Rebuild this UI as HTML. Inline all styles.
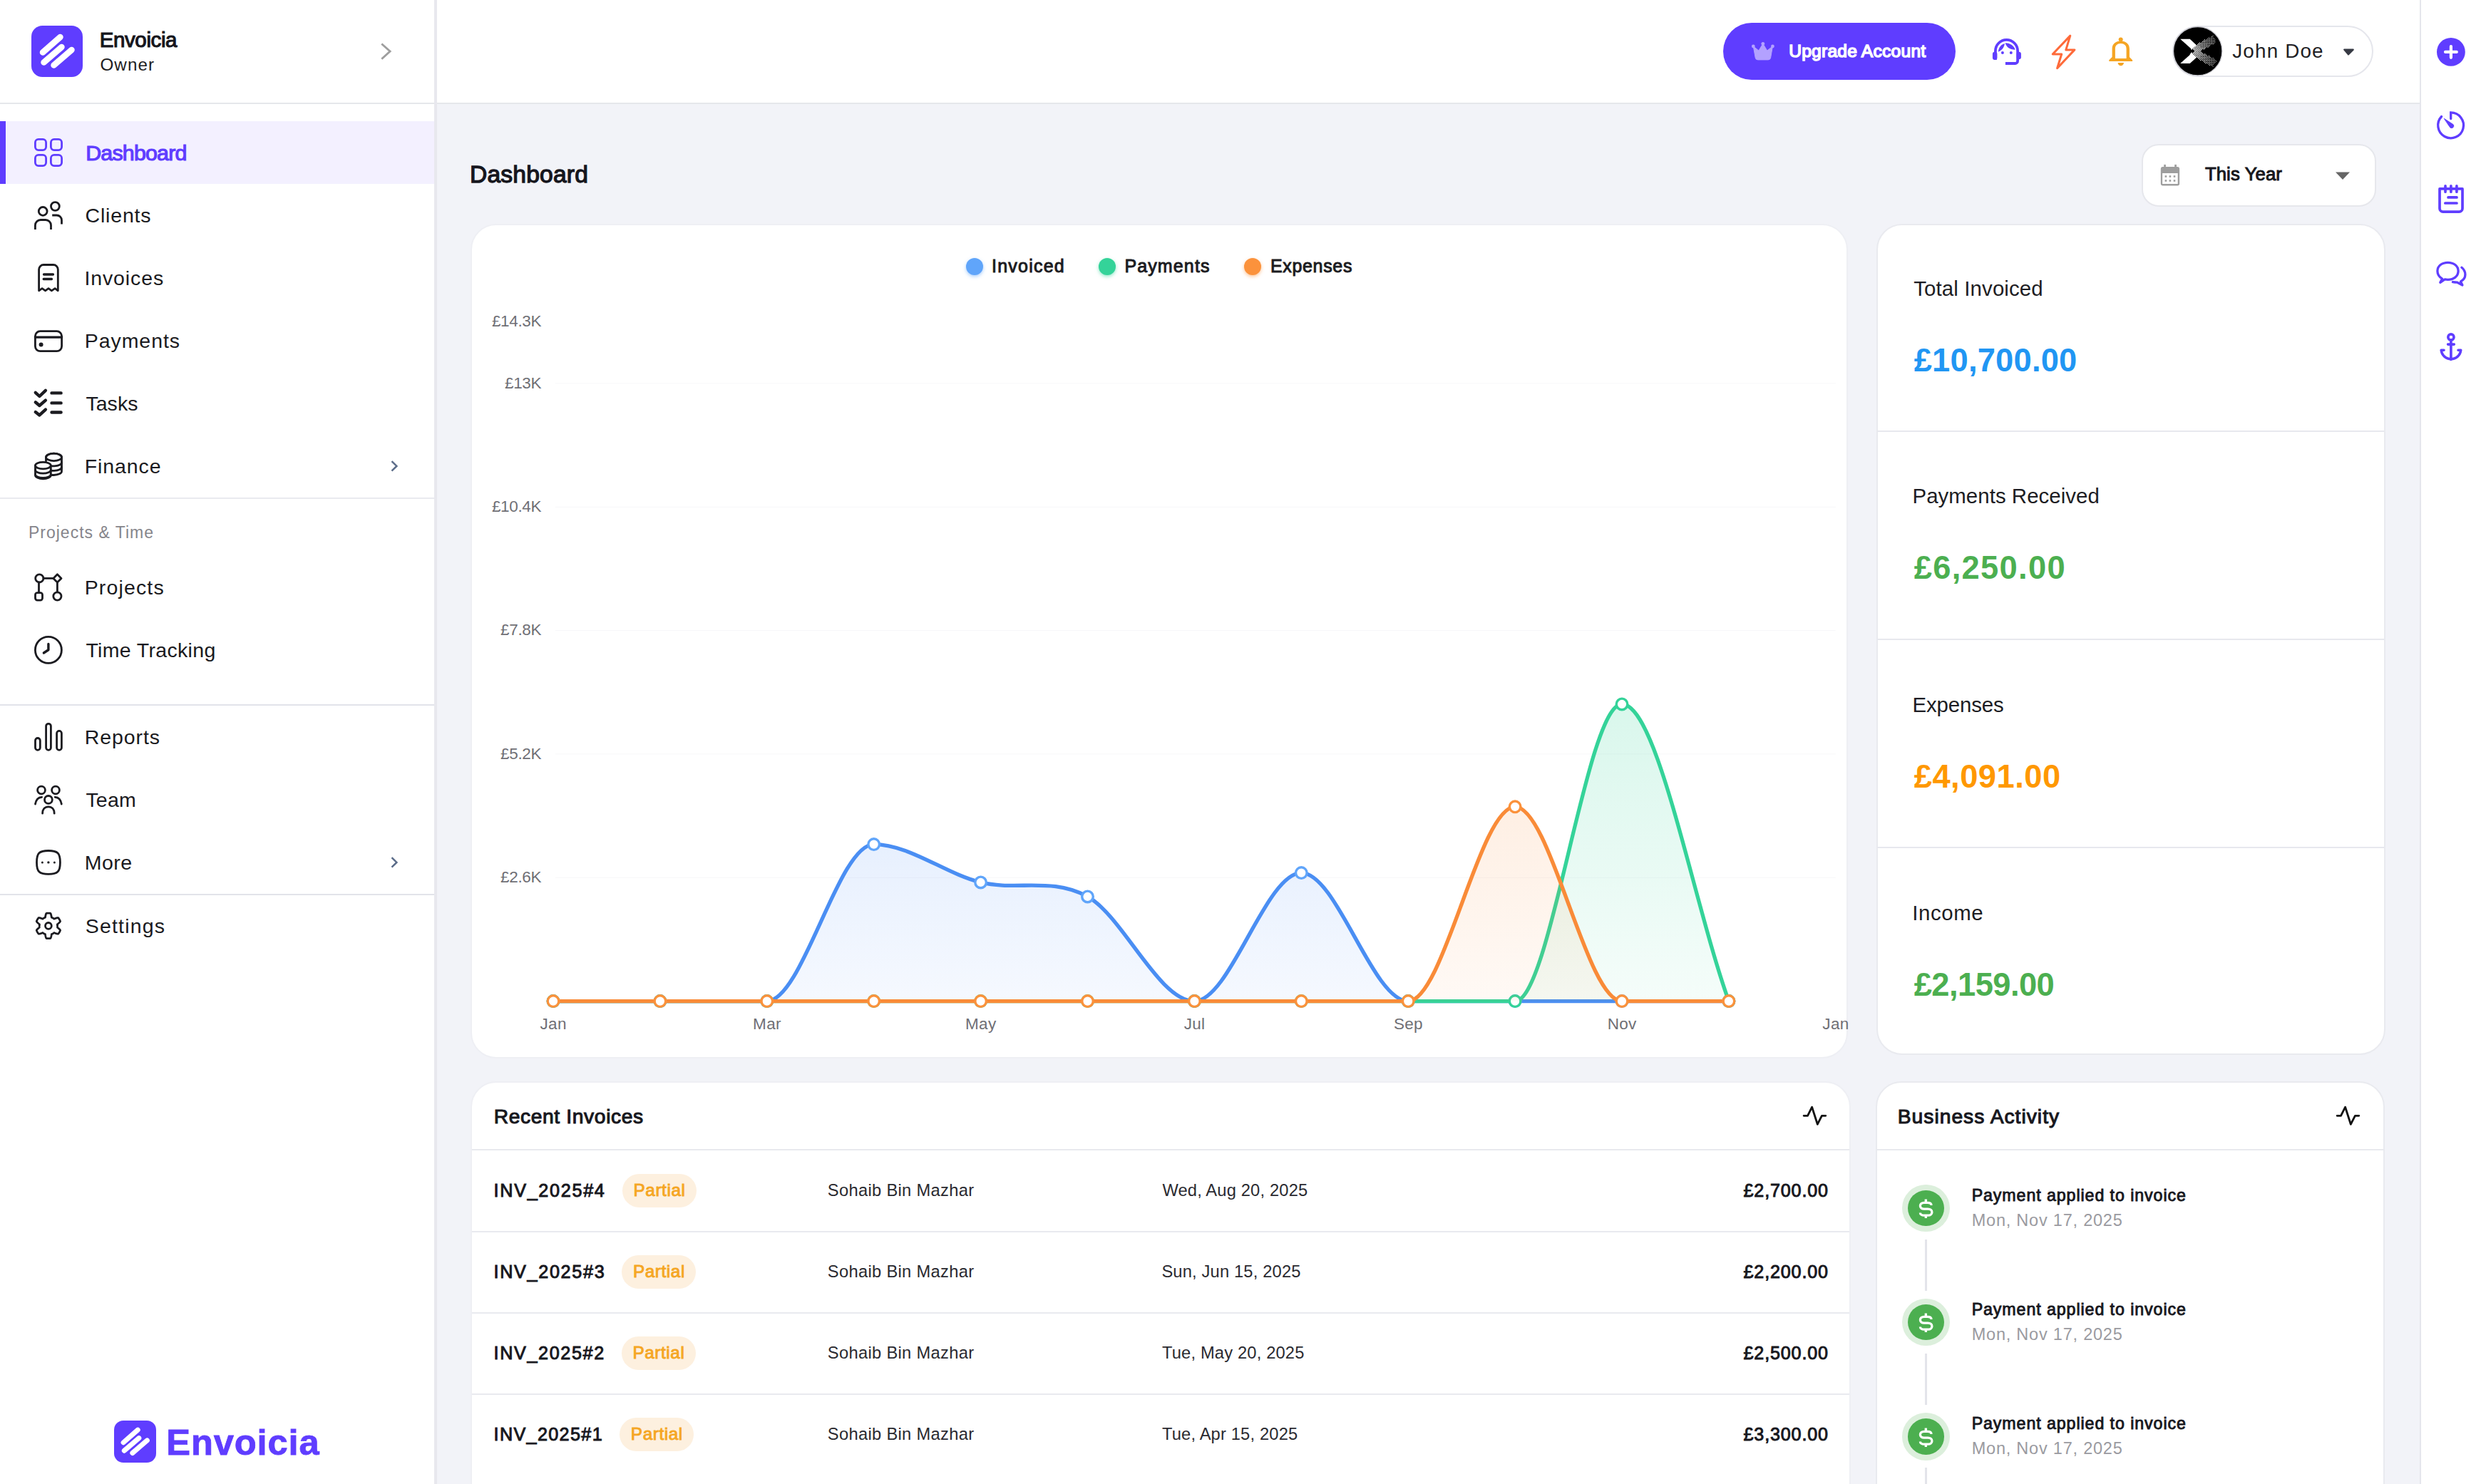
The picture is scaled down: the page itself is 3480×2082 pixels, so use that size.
<!DOCTYPE html>
<html><head><meta charset="utf-8"><style>
html,body{margin:0;padding:0;}
body{width:3480px;height:2082px;position:relative;overflow:hidden;background:#f2f3f8;font-family:"Liberation Sans",sans-serif;}
</style></head><body>
<div style="position:absolute;left:0px;top:0px;width:609px;height:2082px;background:#fff"></div><div style="position:absolute;left:609px;top:0px;width:4px;height:2082px;background:#e8e8ee"></div><div style="position:absolute;left:613px;top:0px;width:2781px;height:144px;background:#fff"></div><div style="position:absolute;left:0px;top:144px;width:609px;height:2px;background:#e5e7eb"></div><div style="position:absolute;left:613px;top:144px;width:2781px;height:2px;background:#e5e7eb"></div><div style="position:absolute;left:3394px;top:0px;width:2px;height:2082px;background:#e5e6ec"></div><div style="position:absolute;left:3396px;top:0px;width:84px;height:2082px;background:#fff"></div><svg style="position:absolute;left:44px;top:36px;" width="72" height="72" viewBox="0 0 72 72"><rect width="72" height="72" rx="15.5" fill="#5f3dff"/><g stroke="#fff" stroke-width="8.5" stroke-linecap="round"><line x1="16" y1="37.5" x2="40.5" y2="16"/><line x1="17.5" y1="51.5" x2="42.5" y2="30"/><line x1="31.5" y1="55.5" x2="56.5" y2="34"/></g></svg><div style="position:absolute;top:41.02px;font-size:29.5px;line-height:29.5px;font-weight:400;color:#16161c;white-space:nowrap;-webkit-text-stroke:1.12px #16161c;letter-spacing:-0.403px;left:139.76px;">Envoicia</div><div style="position:absolute;top:79.33px;font-size:24.2px;line-height:24.2px;font-weight:400;color:#1d1d22;white-space:nowrap;letter-spacing:1.050px;left:140.50px;">Owner</div><svg style="position:absolute;left:530px;top:55px;" width="24" height="34" viewBox="0 0 24 34"><path d="M5.3 6.5 L17.1 17 L5.3 27.7" fill="none" stroke="#9e9e9e" stroke-width="2.9" stroke-linecap="butt" stroke-linejoin="miter"/></svg><div style="position:absolute;left:0px;top:170px;width:609px;height:88px;background:#f3f0ff"></div><div style="position:absolute;left:0px;top:170px;width:8px;height:88px;background:#5f3dff"></div><svg style="position:absolute;left:0;top:0" width="608" height="1400"><g transform="translate(48,194)" fill="none" stroke="#5f3dff" stroke-width="2.8" stroke-linecap="round" stroke-linejoin="round" ><rect x="1.4" y="1.4" width="15.2" height="15.2" rx="4.5"/><rect x="23.4" y="1.4" width="15.2" height="15.2" rx="4.5"/><rect x="1.4" y="23.4" width="15.2" height="15.2" rx="4.5"/><rect x="23.4" y="23.4" width="15.2" height="15.2" rx="4.5"/></g><g transform="translate(48,282)" fill="none" stroke="#1b1b20" stroke-width="2.8" stroke-linejoin="round" stroke-linecap="butt"><circle cx="12.2" cy="14.4" r="5.9"/><path d="M1.4 39.9 V34 a7.5 7.5 0 0 1 7.5 -7.5 h7.1 a7.5 7.5 0 0 1 7.5 7.5 V39.9"/><circle cx="29.4" cy="7.5" r="5.9"/><path d="M25.2 20 H31.5 a7 7 0 0 1 7 7 V32.6"/></g><g transform="translate(48,370)" fill="none" stroke="#1b1b20" stroke-width="2.8" stroke-linecap="round" stroke-linejoin="round" ><path d="M6.6 37.8 V8 a6.5 6.5 0 0 1 6.5 -6.5 h13.7 a6.5 6.5 0 0 1 6.5 6.5 V37.8 L29.1 34.7 L24.4 37.8 L20 34.7 L15.6 37.8 L11.1 34.7 Z"/><path d="M13.5 15 H26.5 M13.2 21.5 H24.5" stroke-width="3.3"/></g><g transform="translate(48,458)" fill="none" stroke="#1b1b20" stroke-width="2.8" stroke-linecap="round" stroke-linejoin="round" ><rect x="1.4" y="6.6" width="37.2" height="28.1" rx="7"/><path d="M1.4 15.1 H38.6" stroke-width="3.4"/><circle cx="9.6" cy="25.6" r="1.6" fill="#1b1b20"/></g><g transform="translate(48,546)" fill="none" stroke="#1b1b20" stroke-width="4.4" stroke-linecap="round" stroke-linejoin="round" ><path d="M1.8 4.8 L7.4 10 L15.9 1.8 M1.8 18.3 L7.4 23 L15.9 15.6 M1.8 32 L7.4 36.4 L15.9 28.6 M24.5 5.4 H37.6 M24.5 19.4 H37.6 M24.5 32.5 H37.6"/></g><g transform="translate(48,634)" fill="none" stroke="#1b1b20" stroke-width="2.8" stroke-linecap="round" stroke-linejoin="round" ><path d="M16.5 13 V7.4 a11 5.2 0 0 1 22 0 V27 a11 5.2 0 0 1 -11 5.5 H23.5"/><ellipse cx="27.5" cy="7.4" rx="11" ry="5.2"/><path d="M23.5 19.9 H28 a10.5 5.2 0 0 0 10.5 -5.5 M23.5 26.4 H28 a10.5 5.2 0 0 0 10.5 -5.5" /><path d="M1.5 19.1 V32.8 a10.9 5 0 0 0 21.8 0 V19.1"/><ellipse cx="12.4" cy="19.1" rx="10.9" ry="4.7" fill="#fff"/><path d="M1.5 25.2 a10.9 5 0 0 0 21.8 0 M1.5 31.4 a10.9 5 0 0 0 21.8 0"/></g><g transform="translate(48,804)" fill="none" stroke="#1b1b20" stroke-width="2.8" stroke-linecap="round" stroke-linejoin="round" ><circle cx="7.3" cy="7.4" r="5.6"/><path d="M32.4 1.8 L38 7.4 L32.4 13 L26.8 7.4 Z"/><path d="M13 7.4 H26.8 M6.5 13 V27.6 M32.4 13 V26.9"/><rect x="1.5" y="27.6" width="10" height="10.5" rx="2.8"/><circle cx="32.4" cy="32.5" r="5.6"/></g><g transform="translate(48,892)" fill="none" stroke="#1b1b20" stroke-width="2.8" stroke-linecap="round" stroke-linejoin="round" ><circle cx="19.9" cy="19.9" r="18.5"/><path d="M19.9 11.5 V19.8 L13.4 24" stroke-width="3.4"/></g><g transform="translate(48,1014)" fill="none" stroke="#1b1b20" stroke-width="2.8" stroke-linecap="round" stroke-linejoin="round" ><rect x="1.5" y="21.5" width="6.8" height="16.8" rx="3.4"/><rect x="16.6" y="1.3" width="6.8" height="37" rx="3.4"/><rect x="31.6" y="11.4" width="6.8" height="26.9" rx="3.4"/></g><g transform="translate(48,1102)" fill="none" stroke="#1b1b20" stroke-width="2.8" stroke-linecap="round" stroke-linejoin="round" ><circle cx="10" cy="6.5" r="5.4"/><circle cx="30" cy="6.5" r="5.4"/><circle cx="19.9" cy="19.9" r="5.4"/><path d="M1.5 26 C2.5 20 5.5 16.6 10.6 16.3 M38.3 26 C37.3 20 34.3 16.6 29.2 16.3 M11.6 39.2 C11.6 33.3 15 29.8 19.9 29.8 C24.8 29.8 28.2 33.3 28.2 39.2"/></g><g transform="translate(48,1190)" fill="none" stroke="#1b1b20" stroke-width="2.8" stroke-linecap="round" stroke-linejoin="round" ><path d="M3.5 19.9 C3.5 7 7 3.5 19.9 3.5 C32.8 3.5 36.4 7 36.4 19.9 C36.4 32.8 32.8 36.4 19.9 36.4 C7 36.4 3.5 32.8 3.5 19.9 Z"/><circle cx="11.4" cy="19.9" r="1.5" fill="#1b1b20" stroke="none"/><circle cx="19.9" cy="19.9" r="1.7" fill="#1b1b20" stroke="none"/><circle cx="28.4" cy="19.9" r="1.5" fill="#1b1b20" stroke="none"/></g><g transform="translate(48,1279)" fill="none" stroke="#1b1b20" stroke-width="2.8" stroke-linecap="round" stroke-linejoin="round" ><polygon points="32.50,19.90 32.50,20.23 32.48,20.56 32.46,20.89 32.43,21.22 32.39,21.54 32.34,21.87 32.64,22.26 33.27,22.74 33.93,23.27 34.58,23.83 35.22,24.44 35.81,25.07 36.34,25.72 36.52,26.28 36.35,26.71 36.16,27.14 35.97,27.56 35.76,27.98 35.54,28.39 35.32,28.80 35.08,29.20 34.83,29.59 34.57,29.98 34.30,30.36 34.02,30.74 33.73,31.10 33.16,31.23 32.33,31.09 31.49,30.89 30.65,30.65 29.83,30.37 29.05,30.06 28.32,29.75 27.83,29.69 27.57,29.90 27.31,30.09 27.04,30.28 26.76,30.47 26.48,30.64 26.20,30.81 25.91,30.97 25.62,31.13 25.32,31.27 25.02,31.41 24.72,31.54 24.42,31.66 24.23,32.11 24.13,32.90 24.00,33.73 23.83,34.58 23.63,35.43 23.38,36.26 23.08,37.05 22.68,37.48 22.22,37.55 21.76,37.60 21.30,37.65 20.83,37.68 20.37,37.69 19.90,37.70 19.43,37.69 18.97,37.68 18.50,37.65 18.04,37.60 17.58,37.55 17.12,37.48 16.72,37.05 16.42,36.26 16.17,35.43 15.97,34.58 15.80,33.73 15.67,32.90 15.57,32.11 15.38,31.66 15.08,31.54 14.78,31.41 14.48,31.27 14.18,31.13 13.89,30.97 13.60,30.81 13.32,30.64 13.04,30.47 12.76,30.28 12.49,30.09 12.23,29.90 11.97,29.69 11.48,29.75 10.75,30.06 9.97,30.37 9.15,30.65 8.31,30.89 7.47,31.09 6.64,31.23 6.07,31.10 5.78,30.74 5.50,30.36 5.23,29.98 4.97,29.59 4.72,29.20 4.48,28.80 4.26,28.39 4.04,27.98 3.83,27.56 3.64,27.14 3.45,26.71 3.28,26.28 3.46,25.72 3.99,25.07 4.58,24.44 5.22,23.83 5.87,23.27 6.53,22.74 7.16,22.26 7.46,21.87 7.41,21.54 7.37,21.22 7.34,20.89 7.32,20.56 7.30,20.23 7.30,19.90 7.30,19.57 7.32,19.24 7.34,18.91 7.37,18.58 7.41,18.26 7.46,17.93 7.16,17.54 6.53,17.06 5.87,16.53 5.22,15.97 4.58,15.36 3.99,14.73 3.46,14.08 3.28,13.52 3.45,13.09 3.64,12.66 3.83,12.24 4.04,11.82 4.26,11.41 4.48,11.00 4.72,10.60 4.97,10.21 5.23,9.82 5.50,9.44 5.78,9.06 6.07,8.70 6.64,8.57 7.47,8.71 8.31,8.91 9.15,9.15 9.97,9.43 10.75,9.74 11.48,10.05 11.97,10.11 12.23,9.90 12.49,9.71 12.76,9.52 13.04,9.33 13.32,9.16 13.60,8.99 13.89,8.83 14.18,8.67 14.48,8.53 14.78,8.39 15.08,8.26 15.38,8.14 15.57,7.69 15.67,6.90 15.80,6.07 15.97,5.22 16.17,4.37 16.42,3.54 16.72,2.75 17.12,2.32 17.58,2.25 18.04,2.20 18.50,2.15 18.97,2.12 19.43,2.11 19.90,2.10 20.37,2.11 20.83,2.12 21.30,2.15 21.76,2.20 22.22,2.25 22.68,2.32 23.08,2.75 23.38,3.54 23.63,4.37 23.83,5.22 24.00,6.07 24.13,6.90 24.23,7.69 24.42,8.14 24.72,8.26 25.02,8.39 25.32,8.53 25.62,8.67 25.91,8.83 26.20,8.99 26.48,9.16 26.76,9.33 27.04,9.52 27.31,9.71 27.57,9.90 27.83,10.11 28.32,10.05 29.05,9.74 29.83,9.43 30.65,9.15 31.49,8.91 32.33,8.71 33.16,8.57 33.73,8.70 34.02,9.06 34.30,9.44 34.57,9.82 34.83,10.21 35.08,10.60 35.32,11.00 35.54,11.41 35.76,11.82 35.97,12.24 36.16,12.66 36.35,13.09 36.52,13.52 36.34,14.08 35.81,14.73 35.22,15.36 34.58,15.97 33.93,16.53 33.27,17.06 32.64,17.54 32.34,17.93 32.39,18.26 32.43,18.58 32.46,18.91 32.48,19.24 32.50,19.57"/><circle cx="19.9" cy="19.9" r="4.4"/></g></svg><div style="position:absolute;top:198.56px;font-size:30.4px;line-height:30.4px;font-weight:400;color:#5f3dff;white-space:nowrap;-webkit-text-stroke:1.16px #5f3dff;letter-spacing:-0.807px;left:120.18px;">Dashboard</div><div style="position:absolute;top:287.57px;font-size:28.5px;line-height:28.5px;font-weight:400;color:#1a1a20;white-space:nowrap;letter-spacing:0.800px;left:119.60px;">Clients</div><div style="position:absolute;top:375.57px;font-size:28.5px;line-height:28.5px;font-weight:400;color:#1a1a20;white-space:nowrap;letter-spacing:0.900px;left:118.40px;">Invoices</div><div style="position:absolute;top:463.57px;font-size:28.5px;line-height:28.5px;font-weight:400;color:#1a1a20;white-space:nowrap;letter-spacing:0.957px;left:118.70px;">Payments</div><div style="position:absolute;top:551.57px;font-size:28.5px;line-height:28.5px;font-weight:400;color:#1a1a20;white-space:nowrap;letter-spacing:0.050px;left:120.40px;">Tasks</div><div style="position:absolute;top:639.57px;font-size:28.5px;line-height:28.5px;font-weight:400;color:#1a1a20;white-space:nowrap;letter-spacing:0.900px;left:118.70px;">Finance</div><div style="position:absolute;top:809.57px;font-size:28.5px;line-height:28.5px;font-weight:400;color:#1a1a20;white-space:nowrap;letter-spacing:1.143px;left:118.70px;">Projects</div><div style="position:absolute;top:897.57px;font-size:28.5px;line-height:28.5px;font-weight:400;color:#1a1a20;white-space:nowrap;letter-spacing:0.333px;left:120.40px;">Time Tracking</div><div style="position:absolute;top:1019.57px;font-size:28.5px;line-height:28.5px;font-weight:400;color:#1a1a20;white-space:nowrap;letter-spacing:0.917px;left:118.70px;">Reports</div><div style="position:absolute;top:1107.58px;font-size:28.5px;line-height:28.5px;font-weight:400;color:#1a1a20;white-space:nowrap;letter-spacing:0.200px;left:120.40px;">Team</div><div style="position:absolute;top:1195.58px;font-size:28.5px;line-height:28.5px;font-weight:400;color:#1a1a20;white-space:nowrap;letter-spacing:0.500px;left:118.70px;">More</div><div style="position:absolute;top:1284.58px;font-size:28.5px;line-height:28.5px;font-weight:400;color:#1a1a20;white-space:nowrap;letter-spacing:1.200px;left:119.70px;">Settings</div><div style="position:absolute;left:0px;top:697.5px;width:609px;height:2px;background:#e9eaef"></div><div style="position:absolute;top:736.45px;font-size:23px;line-height:23px;font-weight:400;color:#85858b;white-space:nowrap;letter-spacing:0.993px;left:40.00px;">Projects &amp; Time</div><div style="position:absolute;left:0px;top:987.6px;width:609px;height:2px;background:#e2e3ea"></div><div style="position:absolute;left:0px;top:1253.6px;width:609px;height:2px;background:#e2e3ea"></div><svg style="position:absolute;left:544px;top:644px;" width="20" height="20" viewBox="0 0 20 20"><path d="M5.5 3.2 L12.4 9.9 L5.5 16.7" fill="none" stroke="#5b6c89" stroke-width="2.5" stroke-linecap="butt" stroke-linejoin="miter"/></svg><svg style="position:absolute;left:544px;top:1200px;" width="20" height="20" viewBox="0 0 20 20"><path d="M5.5 3.2 L12.4 9.9 L5.5 16.7" fill="none" stroke="#5b6c89" stroke-width="2.5" stroke-linecap="butt" stroke-linejoin="miter"/></svg><svg style="position:absolute;left:160px;top:1993px;" width="59" height="59" viewBox="0 0 59 59"><rect width="59" height="59" rx="13" fill="#5f3dff"/><g transform="scale(0.82)"><g stroke="#fff" stroke-width="8.5" stroke-linecap="round"><line x1="16" y1="37.5" x2="40.5" y2="16"/><line x1="17.5" y1="51.5" x2="42.5" y2="30"/><line x1="31.5" y1="55.5" x2="56.5" y2="34"/></g></g></svg><div style="position:absolute;top:1998.90px;font-size:50.7px;line-height:50.7px;font-weight:700;color:#5f3dff;white-space:nowrap;letter-spacing:0.843px;left:233.30px;-webkit-text-stroke:0.8px #5f3dff;">Envoicia</div><div style="position:absolute;left:2417px;top:32px;width:326px;height:80px;background:#5f3dff;border-radius:40px"></div><div style="position:absolute;top:59.99px;font-size:24.6px;line-height:24.6px;font-weight:400;color:#fff;white-space:nowrap;-webkit-text-stroke:1.50px #fff;letter-spacing:0.236px;left:2509.15px;">Upgrade Account</div><div style="position:absolute;left:3047px;top:36px;width:282px;height:72px;box-sizing:border-box;border:2px solid #e5e6ec;border-radius:36px;background:#fff"></div><div style="position:absolute;top:57.87px;font-size:27.8px;line-height:27.8px;font-weight:400;color:#1f1f25;white-space:nowrap;letter-spacing:1.171px;left:3131.30px;">John Doe</div><svg style="position:absolute;left:3280px;top:62px;" width="28" height="22" viewBox="0 0 28 22"><path d="M8.2 7.6 L20.7 7.6 L13.9 14.4 Z" fill="#373a44" stroke="#373a44" stroke-width="2.2" stroke-linejoin="round"/></svg><div style="position:absolute;top:228.14px;font-size:33.6px;line-height:33.6px;font-weight:400;color:#16161d;white-space:nowrap;-webkit-text-stroke:1.28px #16161d;letter-spacing:0.215px;left:658.94px;">Dashboard</div><div style="position:absolute;left:3004px;top:202px;width:329px;height:87.5px;box-sizing:border-box;border:2.5px solid #e6e7ec;border-radius:24px;background:#fff"></div><div style="position:absolute;top:232.25px;font-size:25.7px;line-height:25.7px;font-weight:400;color:#17171c;white-space:nowrap;-webkit-text-stroke:0.98px #17171c;letter-spacing:0.115px;left:3092.89px;">This Year</div><svg style="position:absolute;left:3270px;top:236px;" width="30" height="20" viewBox="0 0 30 20"><path d="M6 5.5 L26 5.5 L16 16 Z" fill="#666"/></svg><div style="position:absolute;left:659.5px;top:313.5px;width:1932px;height:1171px;box-sizing:border-box;border:2px solid #eeeff4;border-radius:36px;background:#fff"></div><div style="position:absolute;left:2632px;top:313.5px;width:713.5px;height:1166.5px;box-sizing:border-box;border:2px solid #e9eaef;border-radius:36px;background:#fff"></div><div style="position:absolute;left:2633px;top:603.5px;width:711px;height:2px;background:#e7e8ee"></div><div style="position:absolute;left:2633px;top:896px;width:711px;height:2px;background:#e7e8ee"></div><div style="position:absolute;left:2633px;top:1188px;width:711px;height:2px;background:#e7e8ee"></div><div style="position:absolute;top:390.21px;font-size:29.4px;line-height:29.4px;font-weight:400;color:#1d1d23;white-space:nowrap;letter-spacing:0.138px;left:2684.20px;">Total Invoiced</div><div style="position:absolute;top:483.10px;font-size:45.3px;line-height:45.3px;font-weight:700;color:#2196f3;white-space:nowrap;letter-spacing:0.211px;left:2684.70px;">&#163;10,700.00</div><div style="position:absolute;top:681.41px;font-size:29.4px;line-height:29.4px;font-weight:400;color:#1d1d23;white-space:nowrap;letter-spacing:0.056px;left:2682.50px;">Payments Received</div><div style="position:absolute;top:774.20px;font-size:45.3px;line-height:45.3px;font-weight:700;color:#4caf50;white-space:nowrap;letter-spacing:1.312px;left:2684.70px;">&#163;6,250.00</div><div style="position:absolute;top:974.01px;font-size:29.4px;line-height:29.4px;font-weight:400;color:#1d1d23;white-space:nowrap;letter-spacing:-0.114px;left:2682.50px;">Expenses</div><div style="position:absolute;top:1067.09px;font-size:45.3px;line-height:45.3px;font-weight:700;color:#ff9800;white-space:nowrap;letter-spacing:0.500px;left:2684.70px;">&#163;4,091.00</div><div style="position:absolute;top:1266.41px;font-size:29.4px;line-height:29.4px;font-weight:400;color:#1d1d23;white-space:nowrap;letter-spacing:0.620px;left:2682.20px;">Income</div><div style="position:absolute;top:1359.49px;font-size:45.3px;line-height:45.3px;font-weight:700;color:#4caf50;white-space:nowrap;letter-spacing:-0.550px;left:2684.70px;">&#163;2,159.00</div><div style="position:absolute;left:660px;top:1517px;width:1936px;height:700px;box-sizing:border-box;border:2px solid #eeeff4;border-radius:36px;background:#fff"></div><div style="position:absolute;left:2631px;top:1517px;width:714px;height:700px;box-sizing:border-box;border:2px solid #e9eaef;border-radius:36px;background:#fff"></div><div style="position:absolute;top:1551.53px;font-size:28.2px;line-height:28.2px;font-weight:400;color:#17171d;white-space:nowrap;-webkit-text-stroke:1.07px #17171d;letter-spacing:0.645px;left:692.64px;">Recent Invoices</div><div style="position:absolute;top:1551.73px;font-size:28.2px;line-height:28.2px;font-weight:400;color:#17171d;white-space:nowrap;-webkit-text-stroke:1.07px #17171d;letter-spacing:1.027px;left:2661.74px;">Business Activity</div><div style="position:absolute;left:662px;top:1612px;width:1932px;height:2px;background:#e8e9ee"></div><div style="position:absolute;left:2633px;top:1612px;width:710px;height:2px;background:#e8e9ee"></div><div style="position:absolute;top:1657.68px;font-size:25.2px;line-height:25.2px;font-weight:400;color:#17171d;white-space:nowrap;-webkit-text-stroke:0.96px #17171d;letter-spacing:1.694px;left:692.58px;">INV_2025#4</div><div style="position:absolute;left:872.7px;top:1646.8px;width:104.3px;height:47.7px;background:#fdf0df;border-radius:24px"></div><div style="position:absolute;top:1658.44px;font-size:24.3px;line-height:24.3px;font-weight:400;color:#f5a623;white-space:nowrap;-webkit-text-stroke:0.92px #f5a623;letter-spacing:0.579px;left:888.56px;">Partial</div><div style="position:absolute;top:1658.95px;font-size:23.7px;line-height:23.7px;font-weight:400;color:#2a2a30;white-space:nowrap;letter-spacing:0.325px;left:1160.80px;">Sohaib Bin Mazhar</div><div style="position:absolute;top:1658.95px;font-size:23.7px;line-height:23.7px;font-weight:400;color:#2a2a30;white-space:nowrap;letter-spacing:0.170px;left:1630.40px;">Wed, Aug 20, 2025</div><div style="position:absolute;top:1657.76px;font-size:25.1px;line-height:25.1px;font-weight:400;color:#17171d;white-space:nowrap;-webkit-text-stroke:0.95px #17171d;letter-spacing:0.850px;right:915.16px;text-align:right;">&#163;2,700.00</div><div style="position:absolute;left:662px;top:1726.5px;width:1932px;height:2px;background:#e9eaef"></div><div style="position:absolute;top:1771.68px;font-size:25.2px;line-height:25.2px;font-weight:400;color:#17171d;white-space:nowrap;-webkit-text-stroke:0.96px #17171d;letter-spacing:1.671px;left:692.58px;">INV_2025#3</div><div style="position:absolute;left:872.0999999999999px;top:1760.8px;width:104.3px;height:47.7px;background:#fdf0df;border-radius:24px"></div><div style="position:absolute;top:1772.44px;font-size:24.3px;line-height:24.3px;font-weight:400;color:#f5a623;white-space:nowrap;-webkit-text-stroke:0.92px #f5a623;letter-spacing:0.579px;left:887.96px;">Partial</div><div style="position:absolute;top:1772.95px;font-size:23.7px;line-height:23.7px;font-weight:400;color:#2a2a30;white-space:nowrap;letter-spacing:0.325px;left:1160.80px;">Sohaib Bin Mazhar</div><div style="position:absolute;top:1772.95px;font-size:23.7px;line-height:23.7px;font-weight:400;color:#2a2a30;white-space:nowrap;letter-spacing:0.170px;left:1629.40px;">Sun, Jun 15, 2025</div><div style="position:absolute;top:1771.76px;font-size:25.1px;line-height:25.1px;font-weight:400;color:#17171d;white-space:nowrap;-webkit-text-stroke:0.95px #17171d;letter-spacing:0.850px;right:915.16px;text-align:right;">&#163;2,200.00</div><div style="position:absolute;left:662px;top:1840.5px;width:1932px;height:2px;background:#e9eaef"></div><div style="position:absolute;top:1885.68px;font-size:25.2px;line-height:25.2px;font-weight:400;color:#17171d;white-space:nowrap;-webkit-text-stroke:0.96px #17171d;letter-spacing:1.627px;left:692.58px;">INV_2025#2</div><div style="position:absolute;left:871.5999999999999px;top:1874.8px;width:104.3px;height:47.7px;background:#fdf0df;border-radius:24px"></div><div style="position:absolute;top:1886.44px;font-size:24.3px;line-height:24.3px;font-weight:400;color:#f5a623;white-space:nowrap;-webkit-text-stroke:0.92px #f5a623;letter-spacing:0.579px;left:887.46px;">Partial</div><div style="position:absolute;top:1886.95px;font-size:23.7px;line-height:23.7px;font-weight:400;color:#2a2a30;white-space:nowrap;letter-spacing:0.325px;left:1160.80px;">Sohaib Bin Mazhar</div><div style="position:absolute;top:1886.95px;font-size:23.7px;line-height:23.7px;font-weight:400;color:#2a2a30;white-space:nowrap;letter-spacing:0.170px;left:1630.00px;">Tue, May 20, 2025</div><div style="position:absolute;top:1885.76px;font-size:25.1px;line-height:25.1px;font-weight:400;color:#17171d;white-space:nowrap;-webkit-text-stroke:0.95px #17171d;letter-spacing:0.850px;right:915.16px;text-align:right;">&#163;2,500.00</div><div style="position:absolute;left:662px;top:1954.5px;width:1932px;height:2px;background:#e9eaef"></div><div style="position:absolute;top:1999.68px;font-size:25.2px;line-height:25.2px;font-weight:400;color:#17171d;white-space:nowrap;-webkit-text-stroke:0.96px #17171d;letter-spacing:1.338px;left:692.58px;">INV_2025#1</div><div style="position:absolute;left:869.0px;top:1988.8px;width:104.3px;height:47.7px;background:#fdf0df;border-radius:24px"></div><div style="position:absolute;top:2000.44px;font-size:24.3px;line-height:24.3px;font-weight:400;color:#f5a623;white-space:nowrap;-webkit-text-stroke:0.92px #f5a623;letter-spacing:0.579px;left:884.86px;">Partial</div><div style="position:absolute;top:2000.95px;font-size:23.7px;line-height:23.7px;font-weight:400;color:#2a2a30;white-space:nowrap;letter-spacing:0.325px;left:1160.80px;">Sohaib Bin Mazhar</div><div style="position:absolute;top:2000.95px;font-size:23.7px;line-height:23.7px;font-weight:400;color:#2a2a30;white-space:nowrap;letter-spacing:0.170px;left:1630.00px;">Tue, Apr 15, 2025</div><div style="position:absolute;top:1999.76px;font-size:25.1px;line-height:25.1px;font-weight:400;color:#17171d;white-space:nowrap;-webkit-text-stroke:0.95px #17171d;letter-spacing:0.850px;right:915.16px;text-align:right;">&#163;3,300.00</div><div style="position:absolute;left:2668.1px;top:1661.7px;width:66.6px;height:66.6px;border-radius:50%;background:#dcefdc"></div><div style="position:absolute;left:2676.2000000000003px;top:1669.8px;width:50.4px;height:50.4px;border-radius:50%;background:#4caf50"></div><svg style="position:absolute;left:2670.1px;top:1665.1px" width="62" height="60"><path d="M39 26 C39 23.6 36.6 22.4 33.8 22.4 H28.8 C25.6 22.4 23.4 24.2 23.4 26.8 C23.4 29.5 25.6 31.2 28.8 31.2 H34.2 C37.6 31.2 39.9 32.9 39.9 35.7 C39.9 38.4 37.6 40.2 34.2 40.2 H28.8 C25.8 40.2 23.4 38.8 23.4 36.4 M31.3 17.5 V22.4 M31.3 40.2 V44" fill="none" stroke="#fff" stroke-width="3.3" stroke-linecap="butt" stroke-linejoin="round"/></svg><div style="position:absolute;top:1665.78px;font-size:23.2px;line-height:23.2px;font-weight:400;color:#17171d;white-space:nowrap;-webkit-text-stroke:0.88px #17171d;letter-spacing:0.925px;left:2765.64px;">Payment applied to invoice</div><div style="position:absolute;top:1700.73px;font-size:23.5px;line-height:23.5px;font-weight:400;color:#9a9aa0;white-space:nowrap;letter-spacing:0.781px;left:2765.70px;">Mon, Nov 17, 2025</div><div style="position:absolute;left:2700px;top:1739.0px;width:3px;height:72px;background:#e3e4ea"></div><div style="position:absolute;left:2668.1px;top:1821.9px;width:66.6px;height:66.6px;border-radius:50%;background:#dcefdc"></div><div style="position:absolute;left:2676.2000000000003px;top:1830.0px;width:50.4px;height:50.4px;border-radius:50%;background:#4caf50"></div><svg style="position:absolute;left:2670.1px;top:1825.3px" width="62" height="60"><path d="M39 26 C39 23.6 36.6 22.4 33.8 22.4 H28.8 C25.6 22.4 23.4 24.2 23.4 26.8 C23.4 29.5 25.6 31.2 28.8 31.2 H34.2 C37.6 31.2 39.9 32.9 39.9 35.7 C39.9 38.4 37.6 40.2 34.2 40.2 H28.8 C25.8 40.2 23.4 38.8 23.4 36.4 M31.3 17.5 V22.4 M31.3 40.2 V44" fill="none" stroke="#fff" stroke-width="3.3" stroke-linecap="butt" stroke-linejoin="round"/></svg><div style="position:absolute;top:1825.98px;font-size:23.2px;line-height:23.2px;font-weight:400;color:#17171d;white-space:nowrap;-webkit-text-stroke:0.88px #17171d;letter-spacing:0.925px;left:2765.64px;">Payment applied to invoice</div><div style="position:absolute;top:1860.93px;font-size:23.5px;line-height:23.5px;font-weight:400;color:#9a9aa0;white-space:nowrap;letter-spacing:0.781px;left:2765.70px;">Mon, Nov 17, 2025</div><div style="position:absolute;left:2700px;top:1899.2px;width:3px;height:72px;background:#e3e4ea"></div><div style="position:absolute;left:2668.1px;top:1982.1000000000001px;width:66.6px;height:66.6px;border-radius:50%;background:#dcefdc"></div><div style="position:absolute;left:2676.2000000000003px;top:1990.2px;width:50.4px;height:50.4px;border-radius:50%;background:#4caf50"></div><svg style="position:absolute;left:2670.1px;top:1985.5px" width="62" height="60"><path d="M39 26 C39 23.6 36.6 22.4 33.8 22.4 H28.8 C25.6 22.4 23.4 24.2 23.4 26.8 C23.4 29.5 25.6 31.2 28.8 31.2 H34.2 C37.6 31.2 39.9 32.9 39.9 35.7 C39.9 38.4 37.6 40.2 34.2 40.2 H28.8 C25.8 40.2 23.4 38.8 23.4 36.4 M31.3 17.5 V22.4 M31.3 40.2 V44" fill="none" stroke="#fff" stroke-width="3.3" stroke-linecap="butt" stroke-linejoin="round"/></svg><div style="position:absolute;top:1986.18px;font-size:23.2px;line-height:23.2px;font-weight:400;color:#17171d;white-space:nowrap;-webkit-text-stroke:0.88px #17171d;letter-spacing:0.925px;left:2765.64px;">Payment applied to invoice</div><div style="position:absolute;top:2021.13px;font-size:23.5px;line-height:23.5px;font-weight:400;color:#9a9aa0;white-space:nowrap;letter-spacing:0.781px;left:2765.70px;">Mon, Nov 17, 2025</div><div style="position:absolute;left:2700px;top:2059.4px;width:3px;height:72px;background:#e3e4ea"></div><svg style="position:absolute;left:0;top:0" width="3480" height="2082" viewBox="0 0 3480 2082"><defs><linearGradient id="gb" gradientUnits="userSpaceOnUse" x1="0" y1="451.3" x2="0" y2="1404.6"><stop offset="0" stop-color="rgb(59,130,246)" stop-opacity="0.36"/><stop offset="1" stop-color="rgb(59,130,246)" stop-opacity="0.05"/></linearGradient><linearGradient id="gg" gradientUnits="userSpaceOnUse" x1="0" y1="451.3" x2="0" y2="1404.6"><stop offset="0" stop-color="rgb(52,211,153)" stop-opacity="0.36"/><stop offset="1" stop-color="rgb(52,211,153)" stop-opacity="0.05"/></linearGradient><linearGradient id="go" gradientUnits="userSpaceOnUse" x1="0" y1="451.3" x2="0" y2="1404.6"><stop offset="0" stop-color="rgb(249,140,56)" stop-opacity="0.36"/><stop offset="1" stop-color="rgb(249,140,56)" stop-opacity="0.05"/></linearGradient></defs><line x1="779.0" y1="1231.3" x2="2574.8" y2="1231.3" stroke="#f7f7f9" stroke-width="1"/><line x1="779.0" y1="1057.9" x2="2574.8" y2="1057.9" stroke="#f7f7f9" stroke-width="1"/><line x1="779.0" y1="884.6" x2="2574.8" y2="884.6" stroke="#f7f7f9" stroke-width="1"/><line x1="779.0" y1="711.3" x2="2574.8" y2="711.3" stroke="#f7f7f9" stroke-width="1"/><line x1="779.0" y1="537.9" x2="2574.8" y2="537.9" stroke="#f7f7f9" stroke-width="1"/><path d="M776.00,1404.60 C825.97,1404.60 875.93,1404.60 925.90,1404.60 C975.87,1404.60 1025.83,1404.60 1075.80,1404.60 C1125.77,1404.60 1175.73,1184.60 1225.70,1184.60 C1275.67,1184.60 1325.63,1225.71 1375.60,1237.94 C1425.57,1250.16 1475.53,1230.16 1525.50,1257.94 C1575.47,1285.71 1625.43,1404.60 1675.40,1404.60 C1725.37,1404.60 1775.33,1224.60 1825.30,1224.60 C1875.27,1224.60 1925.23,1404.60 1975.20,1404.60 C2025.17,1404.60 2075.13,1404.60 2125.10,1404.60 C2175.07,1404.60 2225.03,1404.60 2275.00,1404.60 C2324.97,1404.60 2374.93,1404.60 2424.90,1404.60 L2424.90,1404.6 L776.00,1404.6 Z" fill="url(#gb)"/><path d="M776.00,1404.60 C825.97,1404.60 875.93,1404.60 925.90,1404.60 C975.87,1404.60 1025.83,1404.60 1075.80,1404.60 C1125.77,1404.60 1175.73,1184.60 1225.70,1184.60 C1275.67,1184.60 1325.63,1225.71 1375.60,1237.94 C1425.57,1250.16 1475.53,1230.16 1525.50,1257.94 C1575.47,1285.71 1625.43,1404.60 1675.40,1404.60 C1725.37,1404.60 1775.33,1224.60 1825.30,1224.60 C1875.27,1224.60 1925.23,1404.60 1975.20,1404.60 C2025.17,1404.60 2075.13,1404.60 2125.10,1404.60 C2175.07,1404.60 2225.03,1404.60 2275.00,1404.60 C2324.97,1404.60 2374.93,1404.60 2424.90,1404.60" fill="none" stroke="#4a8ef3" stroke-width="5.3" stroke-linejoin="round"/><circle cx="776.00" cy="1404.60" r="7.8" fill="#fff" stroke="#60a5fa" stroke-width="3.4"/><circle cx="925.90" cy="1404.60" r="7.8" fill="#fff" stroke="#60a5fa" stroke-width="3.4"/><circle cx="1075.80" cy="1404.60" r="7.8" fill="#fff" stroke="#60a5fa" stroke-width="3.4"/><circle cx="1225.70" cy="1184.60" r="7.8" fill="#fff" stroke="#60a5fa" stroke-width="3.4"/><circle cx="1375.60" cy="1237.94" r="7.8" fill="#fff" stroke="#60a5fa" stroke-width="3.4"/><circle cx="1525.50" cy="1257.94" r="7.8" fill="#fff" stroke="#60a5fa" stroke-width="3.4"/><circle cx="1675.40" cy="1404.60" r="7.8" fill="#fff" stroke="#60a5fa" stroke-width="3.4"/><circle cx="1825.30" cy="1224.60" r="7.8" fill="#fff" stroke="#60a5fa" stroke-width="3.4"/><circle cx="1975.20" cy="1404.60" r="7.8" fill="#fff" stroke="#60a5fa" stroke-width="3.4"/><circle cx="2125.10" cy="1404.60" r="7.8" fill="#fff" stroke="#60a5fa" stroke-width="3.4"/><circle cx="2275.00" cy="1404.60" r="7.8" fill="#fff" stroke="#60a5fa" stroke-width="3.4"/><circle cx="2424.90" cy="1404.60" r="7.8" fill="#fff" stroke="#60a5fa" stroke-width="3.4"/><path d="M776.00,1404.60 C825.97,1404.60 875.93,1404.60 925.90,1404.60 C975.87,1404.60 1025.83,1404.60 1075.80,1404.60 C1125.77,1404.60 1175.73,1404.60 1225.70,1404.60 C1275.67,1404.60 1325.63,1404.60 1375.60,1404.60 C1425.57,1404.60 1475.53,1404.60 1525.50,1404.60 C1575.47,1404.60 1625.43,1404.60 1675.40,1404.60 C1725.37,1404.60 1775.33,1404.60 1825.30,1404.60 C1875.27,1404.60 1925.23,1404.60 1975.20,1404.60 C2025.17,1404.60 2075.13,1404.60 2125.10,1404.60 C2175.07,1404.60 2225.03,987.94 2275.00,987.94 C2324.97,987.94 2374.93,1265.71 2424.90,1404.60 L2424.90,1404.6 L776.00,1404.6 Z" fill="url(#gg)"/><path d="M776.00,1404.60 C825.97,1404.60 875.93,1404.60 925.90,1404.60 C975.87,1404.60 1025.83,1404.60 1075.80,1404.60 C1125.77,1404.60 1175.73,1404.60 1225.70,1404.60 C1275.67,1404.60 1325.63,1404.60 1375.60,1404.60 C1425.57,1404.60 1475.53,1404.60 1525.50,1404.60 C1575.47,1404.60 1625.43,1404.60 1675.40,1404.60 C1725.37,1404.60 1775.33,1404.60 1825.30,1404.60 C1875.27,1404.60 1925.23,1404.60 1975.20,1404.60 C2025.17,1404.60 2075.13,1404.60 2125.10,1404.60 C2175.07,1404.60 2225.03,987.94 2275.00,987.94 C2324.97,987.94 2374.93,1265.71 2424.90,1404.60" fill="none" stroke="#34d399" stroke-width="5.3" stroke-linejoin="round"/><circle cx="776.00" cy="1404.60" r="7.8" fill="#fff" stroke="#34d399" stroke-width="3.4"/><circle cx="925.90" cy="1404.60" r="7.8" fill="#fff" stroke="#34d399" stroke-width="3.4"/><circle cx="1075.80" cy="1404.60" r="7.8" fill="#fff" stroke="#34d399" stroke-width="3.4"/><circle cx="1225.70" cy="1404.60" r="7.8" fill="#fff" stroke="#34d399" stroke-width="3.4"/><circle cx="1375.60" cy="1404.60" r="7.8" fill="#fff" stroke="#34d399" stroke-width="3.4"/><circle cx="1525.50" cy="1404.60" r="7.8" fill="#fff" stroke="#34d399" stroke-width="3.4"/><circle cx="1675.40" cy="1404.60" r="7.8" fill="#fff" stroke="#34d399" stroke-width="3.4"/><circle cx="1825.30" cy="1404.60" r="7.8" fill="#fff" stroke="#34d399" stroke-width="3.4"/><circle cx="1975.20" cy="1404.60" r="7.8" fill="#fff" stroke="#34d399" stroke-width="3.4"/><circle cx="2125.10" cy="1404.60" r="7.8" fill="#fff" stroke="#34d399" stroke-width="3.4"/><circle cx="2275.00" cy="987.94" r="7.8" fill="#fff" stroke="#34d399" stroke-width="3.4"/><circle cx="2424.90" cy="1404.60" r="7.8" fill="#fff" stroke="#34d399" stroke-width="3.4"/><path d="M776.00,1404.60 C825.97,1404.60 875.93,1404.60 925.90,1404.60 C975.87,1404.60 1025.83,1404.60 1075.80,1404.60 C1125.77,1404.60 1175.73,1404.60 1225.70,1404.60 C1275.67,1404.60 1325.63,1404.60 1375.60,1404.60 C1425.57,1404.60 1475.53,1404.60 1525.50,1404.60 C1575.47,1404.60 1625.43,1404.60 1675.40,1404.60 C1725.37,1404.60 1775.33,1404.60 1825.30,1404.60 C1875.27,1404.60 1925.23,1404.60 1975.20,1404.60 C2025.17,1404.60 2075.13,1131.87 2125.10,1131.87 C2175.07,1131.87 2225.03,1404.60 2275.00,1404.60 C2324.97,1404.60 2374.93,1404.60 2424.90,1404.60 L2424.90,1404.6 L776.00,1404.6 Z" fill="url(#go)"/><path d="M776.00,1404.60 C825.97,1404.60 875.93,1404.60 925.90,1404.60 C975.87,1404.60 1025.83,1404.60 1075.80,1404.60 C1125.77,1404.60 1175.73,1404.60 1225.70,1404.60 C1275.67,1404.60 1325.63,1404.60 1375.60,1404.60 C1425.57,1404.60 1475.53,1404.60 1525.50,1404.60 C1575.47,1404.60 1625.43,1404.60 1675.40,1404.60 C1725.37,1404.60 1775.33,1404.60 1825.30,1404.60 C1875.27,1404.60 1925.23,1404.60 1975.20,1404.60 C2025.17,1404.60 2075.13,1131.87 2125.10,1131.87 C2175.07,1131.87 2225.03,1404.60 2275.00,1404.60 C2324.97,1404.60 2374.93,1404.60 2424.90,1404.60" fill="none" stroke="#f98b38" stroke-width="5.3" stroke-linejoin="round"/><circle cx="776.00" cy="1404.60" r="7.8" fill="#fff" stroke="#fb923c" stroke-width="3.4"/><circle cx="925.90" cy="1404.60" r="7.8" fill="#fff" stroke="#fb923c" stroke-width="3.4"/><circle cx="1075.80" cy="1404.60" r="7.8" fill="#fff" stroke="#fb923c" stroke-width="3.4"/><circle cx="1225.70" cy="1404.60" r="7.8" fill="#fff" stroke="#fb923c" stroke-width="3.4"/><circle cx="1375.60" cy="1404.60" r="7.8" fill="#fff" stroke="#fb923c" stroke-width="3.4"/><circle cx="1525.50" cy="1404.60" r="7.8" fill="#fff" stroke="#fb923c" stroke-width="3.4"/><circle cx="1675.40" cy="1404.60" r="7.8" fill="#fff" stroke="#fb923c" stroke-width="3.4"/><circle cx="1825.30" cy="1404.60" r="7.8" fill="#fff" stroke="#fb923c" stroke-width="3.4"/><circle cx="1975.20" cy="1404.60" r="7.8" fill="#fff" stroke="#fb923c" stroke-width="3.4"/><circle cx="2125.10" cy="1131.87" r="7.8" fill="#fff" stroke="#fb923c" stroke-width="3.4"/><circle cx="2275.00" cy="1404.60" r="7.8" fill="#fff" stroke="#fb923c" stroke-width="3.4"/><circle cx="2424.90" cy="1404.60" r="7.8" fill="#fff" stroke="#fb923c" stroke-width="3.4"/></svg><div style="position:absolute;left:1355px;top:361.8px;width:24px;height:24px;border-radius:50%;background:#60a5fa;box-shadow:0 2px 5px #60a5fa88"></div><div style="position:absolute;top:360.95px;font-size:25px;line-height:25px;font-weight:400;color:#1b1b21;white-space:nowrap;-webkit-text-stroke:0.95px #1b1b21;letter-spacing:1.236px;left:1390.97px;">Invoiced</div><div style="position:absolute;left:1541.2px;top:361.8px;width:24px;height:24px;border-radius:50%;background:#34d399;box-shadow:0 2px 5px #34d39988"></div><div style="position:absolute;top:360.95px;font-size:25px;line-height:25px;font-weight:400;color:#1b1b21;white-space:nowrap;-webkit-text-stroke:0.95px #1b1b21;letter-spacing:1.136px;left:1577.38px;">Payments</div><div style="position:absolute;left:1745.4px;top:361.8px;width:24px;height:24px;border-radius:50%;background:#fb923c;box-shadow:0 2px 5px #fb923c88"></div><div style="position:absolute;top:360.95px;font-size:25px;line-height:25px;font-weight:400;color:#1b1b21;white-space:nowrap;-webkit-text-stroke:0.95px #1b1b21;letter-spacing:0.679px;left:1781.88px;">Expenses</div><div style="position:absolute;top:440.06px;font-size:22.5px;line-height:22.5px;font-weight:400;color:#6f6f75;white-space:nowrap;letter-spacing:-0.350px;right:2720.83px;text-align:right;">&#163;14.3K</div><div style="position:absolute;top:526.72px;font-size:22.5px;line-height:22.5px;font-weight:400;color:#6f6f75;white-space:nowrap;letter-spacing:-0.350px;right:2720.80px;text-align:right;">&#163;13K</div><div style="position:absolute;top:700.05px;font-size:22.5px;line-height:22.5px;font-weight:400;color:#6f6f75;white-space:nowrap;letter-spacing:-0.350px;right:2720.83px;text-align:right;">&#163;10.4K</div><div style="position:absolute;top:873.38px;font-size:22.5px;line-height:22.5px;font-weight:400;color:#6f6f75;white-space:nowrap;letter-spacing:-0.350px;right:2720.85px;text-align:right;">&#163;7.8K</div><div style="position:absolute;top:1046.71px;font-size:22.5px;line-height:22.5px;font-weight:400;color:#6f6f75;white-space:nowrap;letter-spacing:-0.350px;right:2720.85px;text-align:right;">&#163;5.2K</div><div style="position:absolute;top:1220.05px;font-size:22.5px;line-height:22.5px;font-weight:400;color:#6f6f75;white-space:nowrap;letter-spacing:-0.350px;right:2720.85px;text-align:right;">&#163;2.6K</div><div style="position:absolute;top:1425.67px;font-size:22.5px;line-height:22.5px;font-weight:400;color:#6f6f75;white-space:nowrap;letter-spacing:0.300px;left:476.15px;width:600px;text-align:center;">Jan</div><div style="position:absolute;top:1425.67px;font-size:22.5px;line-height:22.5px;font-weight:400;color:#6f6f75;white-space:nowrap;letter-spacing:0.300px;left:775.95px;width:600px;text-align:center;">Mar</div><div style="position:absolute;top:1425.67px;font-size:22.5px;line-height:22.5px;font-weight:400;color:#6f6f75;white-space:nowrap;letter-spacing:0.300px;left:1075.75px;width:600px;text-align:center;">May</div><div style="position:absolute;top:1425.67px;font-size:22.5px;line-height:22.5px;font-weight:400;color:#6f6f75;white-space:nowrap;letter-spacing:0.300px;left:1375.55px;width:600px;text-align:center;">Jul</div><div style="position:absolute;top:1425.67px;font-size:22.5px;line-height:22.5px;font-weight:400;color:#6f6f75;white-space:nowrap;letter-spacing:0.300px;left:1675.35px;width:600px;text-align:center;">Sep</div><div style="position:absolute;top:1425.67px;font-size:22.5px;line-height:22.5px;font-weight:400;color:#6f6f75;white-space:nowrap;letter-spacing:0.300px;left:1975.15px;width:600px;text-align:center;">Nov</div><div style="position:absolute;top:1425.67px;font-size:22.5px;line-height:22.5px;font-weight:400;color:#6f6f75;white-space:nowrap;letter-spacing:0.300px;left:2274.95px;width:600px;text-align:center;">Jan</div><svg style="position:absolute;left:0;top:0" width="3480" height="2082"><g transform="translate(2785,42)" fill="#5f3dff"><path d="M13.9 41.9 V29.5 A15.6 15.6 0 0 1 45.1 29.5 V43.5 a3.5 3.5 0 0 1 -3.5 3.5 H27.9" fill="none" stroke="#5f3dff" stroke-width="3.8"/><rect x="9.9" y="30.7" width="6.5" height="11.3" rx="3"/><rect x="43.6" y="30.7" width="6.3" height="10.6" rx="3"/><path d="M17.8 30.7 C18.5 24 22 20.5 26.9 19 C26.3 24.5 23 28.7 17.8 30.7 Z"/><path d="M27.6 18.3 C35 18.5 40 22.5 41.7 27.8 C34.5 28 29.5 24.5 27.6 18.3 Z"/><circle cx="23.9" cy="32" r="2"/><circle cx="35.8" cy="32" r="2"/></g><g transform="translate(2865,42)"><path d="M38.8 8.1 L14.2 34 H26.7 L20.6 53.8 L44.9 27.9 H32.8 Z" fill="none" stroke="#fe6a3a" stroke-width="3" stroke-linejoin="round"/></g><g transform="translate(2945,42)" fill="#f5a524"><path fill-rule="evenodd" d="M13.3 43.9 V42.3 L17.6 38 V26.5 C17.6 19.8 22.6 15.6 29.7 15.6 C36.8 15.6 41.9 19.8 41.9 26.5 V38 L46.1 42.3 V43.9 Z M21.9 40 H37.6 V26.5 C37.6 21.8 34.6 19 29.7 19 C24.8 19 21.9 21.8 21.9 26.5 Z"/><circle cx="29.7" cy="13.6" r="3"/><path d="M25.6 46.1 H34 a4.2 4.2 0 0 1 -8.4 0 Z"/></g><g transform="translate(2448,50)" fill="#b3a1ff"><path d="M11.3 15 L18.9 21 L24.8 11.3 L30.7 21 L38.4 15 L35.6 31 a3.5 3.5 0 0 1 -3.4 2.9 H17.6 a3.5 3.5 0 0 1 -3.4 -2.9 Z" stroke="#b3a1ff" stroke-width="1" stroke-linejoin="round"/><circle cx="11.3" cy="15" r="2.4"/><circle cx="24.8" cy="11.3" r="2.4"/><circle cx="38.4" cy="15" r="2.4"/></g><g transform="translate(3020,220)" fill="#9e9e9e"><path fill-rule="evenodd" d="M13.8 14 H34.1 a3 3 0 0 1 3 3 V37.6 a3 3 0 0 1 -3 3 H13.8 a3 3 0 0 1 -3 -3 V17 a3 3 0 0 1 3 -3 Z M13.1 22.9 V38.1 H34.7 V22.9 Z"/><rect x="15.2" y="10.9" width="2.7" height="4"/><rect x="30.2" y="10.9" width="2.7" height="4"/><rect x="16.599999999999998" y="26.2" width="2.6" height="2.6"/><rect x="16.599999999999998" y="32.2" width="2.6" height="2.6"/><rect x="22.599999999999998" y="26.2" width="2.6" height="2.6"/><rect x="22.599999999999998" y="32.2" width="2.6" height="2.6"/><rect x="28.7" y="26.2" width="2.6" height="2.6"/><rect x="28.7" y="32.2" width="2.6" height="2.6"/></g><circle cx="3082.7" cy="71.7" r="34.2" fill="#000" stroke="#c9c9cf" stroke-width="1.3"/><polygon fill="#fff" points="3058.2,54.8 3071.7,54.8 3081.1,63.4 3074.1,69.0"/><polygon fill="#fff" points="3058.2,89.0 3071.7,89.0 3081.1,80.4 3074.1,74.7"/><circle cx="3072.68" cy="75.92" r="1.00" fill="#fff"/><circle cx="3075.53" cy="67.38" r="0.96" fill="#fff"/><circle cx="3074.10" cy="68.80" r="0.99" fill="#fff"/><circle cx="3074.10" cy="74.50" r="0.99" fill="#fff"/><circle cx="3075.53" cy="75.92" r="0.97" fill="#fff"/><circle cx="3078.38" cy="64.53" r="0.91" fill="#fff"/><circle cx="3076.95" cy="65.95" r="0.94" fill="#fff"/><circle cx="3078.38" cy="67.38" r="0.93" fill="#fff"/><circle cx="3076.95" cy="68.80" r="0.99" fill="#fff"/><circle cx="3078.38" cy="70.22" r="0.97" fill="#fff"/><circle cx="3078.38" cy="73.08" r="0.96" fill="#fff"/><circle cx="3076.95" cy="74.50" r="0.99" fill="#fff"/><circle cx="3078.38" cy="75.92" r="0.93" fill="#fff"/><circle cx="3076.95" cy="77.35" r="0.94" fill="#fff"/><circle cx="3078.38" cy="78.78" r="0.92" fill="#fff"/><circle cx="3081.22" cy="64.53" r="0.88" fill="#fff"/><circle cx="3079.80" cy="65.95" r="0.91" fill="#fff"/><circle cx="3081.22" cy="67.38" r="0.90" fill="#fff"/><circle cx="3079.80" cy="68.80" r="0.92" fill="#fff"/><circle cx="3081.22" cy="70.22" r="0.94" fill="#fff"/><circle cx="3079.80" cy="71.65" r="0.94" fill="#fff"/><circle cx="3081.22" cy="73.08" r="0.93" fill="#fff"/><circle cx="3079.80" cy="74.50" r="0.93" fill="#fff"/><circle cx="3081.22" cy="75.92" r="0.90" fill="#fff"/><circle cx="3079.80" cy="77.35" r="0.91" fill="#fff"/><circle cx="3081.22" cy="78.78" r="0.89" fill="#fff"/><circle cx="3079.80" cy="80.20" r="0.89" fill="#fff"/><circle cx="3084.07" cy="61.67" r="0.84" fill="#fff"/><circle cx="3082.65" cy="63.10" r="0.86" fill="#fff"/><circle cx="3084.07" cy="64.53" r="0.85" fill="#fff"/><circle cx="3082.65" cy="65.95" r="0.88" fill="#fff"/><circle cx="3084.07" cy="67.38" r="0.87" fill="#fff"/><circle cx="3082.65" cy="68.80" r="0.89" fill="#fff"/><circle cx="3084.07" cy="70.22" r="0.89" fill="#fff"/><circle cx="3082.65" cy="71.65" r="0.91" fill="#fff"/><circle cx="3084.07" cy="73.08" r="0.89" fill="#fff"/><circle cx="3082.65" cy="74.50" r="0.90" fill="#fff"/><circle cx="3084.07" cy="75.92" r="0.87" fill="#fff"/><circle cx="3082.65" cy="77.35" r="0.88" fill="#fff"/><circle cx="3084.07" cy="78.78" r="0.86" fill="#fff"/><circle cx="3082.65" cy="80.20" r="0.86" fill="#fff"/><circle cx="3084.07" cy="81.62" r="0.84" fill="#fff"/><circle cx="3085.50" cy="60.25" r="0.81" fill="#fff"/><circle cx="3086.93" cy="61.67" r="0.80" fill="#fff"/><circle cx="3085.50" cy="63.10" r="0.83" fill="#fff"/><circle cx="3086.93" cy="64.53" r="0.82" fill="#fff"/><circle cx="3085.50" cy="65.95" r="0.85" fill="#fff"/><circle cx="3086.93" cy="67.38" r="0.84" fill="#fff"/><circle cx="3085.50" cy="68.80" r="0.86" fill="#fff"/><circle cx="3086.93" cy="70.22" r="0.86" fill="#fff"/><circle cx="3085.50" cy="71.65" r="0.88" fill="#fff"/><circle cx="3086.93" cy="73.08" r="0.86" fill="#fff"/><circle cx="3085.50" cy="74.50" r="0.87" fill="#fff"/><circle cx="3086.93" cy="75.92" r="0.84" fill="#fff"/><circle cx="3085.50" cy="77.35" r="0.85" fill="#fff"/><circle cx="3086.93" cy="78.78" r="0.82" fill="#fff"/><circle cx="3085.50" cy="80.20" r="0.83" fill="#fff"/><circle cx="3086.93" cy="81.62" r="0.81" fill="#fff"/><circle cx="3085.50" cy="83.05" r="0.81" fill="#fff"/><circle cx="3086.93" cy="84.47" r="0.79" fill="#fff"/><circle cx="3089.78" cy="58.83" r="0.76" fill="#fff"/><circle cx="3088.35" cy="60.25" r="0.78" fill="#fff"/><circle cx="3089.78" cy="61.67" r="0.77" fill="#fff"/><circle cx="3088.35" cy="63.10" r="0.80" fill="#fff"/><circle cx="3089.78" cy="64.53" r="0.79" fill="#fff"/><circle cx="3088.35" cy="65.95" r="0.81" fill="#fff"/><circle cx="3089.78" cy="67.38" r="0.81" fill="#fff"/><circle cx="3088.35" cy="68.80" r="0.83" fill="#fff"/><circle cx="3088.35" cy="74.50" r="0.83" fill="#fff"/><circle cx="3089.78" cy="75.92" r="0.81" fill="#fff"/><circle cx="3088.35" cy="77.35" r="0.82" fill="#fff"/><circle cx="3089.78" cy="78.78" r="0.79" fill="#fff"/><circle cx="3088.35" cy="80.20" r="0.80" fill="#fff"/><circle cx="3089.78" cy="81.62" r="0.78" fill="#fff"/><circle cx="3088.35" cy="83.05" r="0.78" fill="#fff"/><circle cx="3089.78" cy="84.47" r="0.76" fill="#fff"/><circle cx="3092.62" cy="55.98" r="0.71" fill="#fff"/><circle cx="3091.20" cy="57.40" r="0.73" fill="#fff"/><circle cx="3092.62" cy="58.83" r="0.73" fill="#fff"/><circle cx="3091.20" cy="60.25" r="0.75" fill="#fff"/><circle cx="3092.62" cy="61.67" r="0.74" fill="#fff"/><circle cx="3091.20" cy="63.10" r="0.77" fill="#fff"/><circle cx="3092.62" cy="64.53" r="0.76" fill="#fff"/><circle cx="3091.20" cy="65.95" r="0.78" fill="#fff"/><circle cx="3092.62" cy="67.38" r="0.78" fill="#fff"/><circle cx="3091.20" cy="68.80" r="0.80" fill="#fff"/><circle cx="3092.62" cy="75.92" r="0.78" fill="#fff"/><circle cx="3091.20" cy="77.35" r="0.79" fill="#fff"/><circle cx="3092.62" cy="78.78" r="0.76" fill="#fff"/><circle cx="3091.20" cy="80.20" r="0.77" fill="#fff"/><circle cx="3092.62" cy="81.62" r="0.75" fill="#fff"/><circle cx="3091.20" cy="83.05" r="0.75" fill="#fff"/><circle cx="3092.62" cy="84.47" r="0.73" fill="#fff"/><circle cx="3091.20" cy="85.90" r="0.74" fill="#fff"/><circle cx="3092.62" cy="87.33" r="0.71" fill="#fff"/><circle cx="3095.47" cy="55.98" r="0.68" fill="#fff"/><circle cx="3094.05" cy="57.40" r="0.70" fill="#fff"/><circle cx="3095.47" cy="58.83" r="0.70" fill="#fff"/><circle cx="3094.05" cy="60.25" r="0.72" fill="#fff"/><circle cx="3095.47" cy="61.67" r="0.71" fill="#fff"/><circle cx="3094.05" cy="63.10" r="0.74" fill="#fff"/><circle cx="3095.47" cy="64.53" r="0.73" fill="#fff"/><circle cx="3094.05" cy="65.95" r="0.75" fill="#fff"/><circle cx="3094.05" cy="77.35" r="0.76" fill="#fff"/><circle cx="3095.47" cy="78.78" r="0.73" fill="#fff"/><circle cx="3094.05" cy="80.20" r="0.74" fill="#fff"/><circle cx="3095.47" cy="81.62" r="0.71" fill="#fff"/><circle cx="3094.05" cy="83.05" r="0.72" fill="#fff"/><circle cx="3095.47" cy="84.47" r="0.70" fill="#fff"/><circle cx="3094.05" cy="85.90" r="0.71" fill="#fff"/><circle cx="3095.47" cy="87.33" r="0.68" fill="#fff"/><circle cx="3094.05" cy="88.75" r="0.69" fill="#fff"/><circle cx="3098.32" cy="53.12" r="0.63" fill="#fff"/><circle cx="3096.90" cy="54.55" r="0.65" fill="#fff"/><circle cx="3098.32" cy="55.98" r="0.65" fill="#fff"/><circle cx="3096.90" cy="57.40" r="0.67" fill="#fff"/><circle cx="3098.32" cy="58.83" r="0.66" fill="#fff"/><circle cx="3096.90" cy="60.25" r="0.69" fill="#fff"/><circle cx="3098.32" cy="61.67" r="0.68" fill="#fff"/><circle cx="3096.90" cy="63.10" r="0.70" fill="#fff"/><circle cx="3098.32" cy="64.53" r="0.70" fill="#fff"/><circle cx="3096.90" cy="65.95" r="0.72" fill="#fff"/><circle cx="3098.32" cy="78.78" r="0.70" fill="#fff"/><circle cx="3096.90" cy="80.20" r="0.71" fill="#fff"/><circle cx="3098.32" cy="81.62" r="0.68" fill="#fff"/><circle cx="3096.90" cy="83.05" r="0.69" fill="#fff"/><circle cx="3098.32" cy="84.47" r="0.67" fill="#fff"/><circle cx="3096.90" cy="85.90" r="0.67" fill="#fff"/><circle cx="3098.32" cy="87.33" r="0.65" fill="#fff"/><circle cx="3096.90" cy="88.75" r="0.66" fill="#fff"/><circle cx="3098.32" cy="90.18" r="0.63" fill="#fff"/><circle cx="3101.18" cy="53.12" r="0.60" fill="#fff"/><circle cx="3099.75" cy="54.55" r="0.62" fill="#fff"/><circle cx="3101.18" cy="55.98" r="0.62" fill="#fff"/><circle cx="3099.75" cy="57.40" r="0.64" fill="#fff"/><circle cx="3101.18" cy="58.83" r="0.63" fill="#fff"/><circle cx="3099.75" cy="60.25" r="0.66" fill="#fff"/><circle cx="3101.18" cy="61.67" r="0.65" fill="#fff"/><circle cx="3099.75" cy="63.10" r="0.67" fill="#fff"/><circle cx="3099.75" cy="80.20" r="0.68" fill="#fff"/><circle cx="3101.18" cy="81.62" r="0.65" fill="#fff"/><circle cx="3099.75" cy="83.05" r="0.66" fill="#fff"/><circle cx="3101.18" cy="84.47" r="0.64" fill="#fff"/><circle cx="3099.75" cy="85.90" r="0.64" fill="#fff"/><circle cx="3101.18" cy="87.33" r="0.62" fill="#fff"/><circle cx="3099.75" cy="88.75" r="0.63" fill="#fff"/><circle cx="3101.18" cy="90.18" r="0.60" fill="#fff"/><circle cx="3099.75" cy="91.60" r="0.61" fill="#fff"/><circle cx="3104.03" cy="50.27" r="0.55" fill="#fff"/><circle cx="3102.60" cy="51.70" r="0.58" fill="#fff"/><circle cx="3104.03" cy="53.12" r="0.57" fill="#fff"/><circle cx="3102.60" cy="54.55" r="0.59" fill="#fff"/><circle cx="3104.03" cy="55.98" r="0.59" fill="#fff"/><circle cx="3102.60" cy="57.40" r="0.61" fill="#fff"/><circle cx="3104.03" cy="58.83" r="0.60" fill="#fff"/><circle cx="3102.60" cy="60.25" r="0.63" fill="#fff"/><circle cx="3104.03" cy="61.67" r="0.62" fill="#fff"/><circle cx="3104.03" cy="81.62" r="0.62" fill="#fff"/><circle cx="3102.60" cy="83.05" r="0.63" fill="#fff"/><circle cx="3104.03" cy="84.47" r="0.61" fill="#fff"/><circle cx="3102.60" cy="85.90" r="0.61" fill="#fff"/><circle cx="3104.03" cy="87.33" r="0.59" fill="#fff"/><circle cx="3102.60" cy="88.75" r="0.60" fill="#fff"/><circle cx="3104.03" cy="90.18" r="0.57" fill="#fff"/><circle cx="3102.60" cy="91.60" r="0.58" fill="#fff"/><circle cx="3104.03" cy="93.03" r="0.55" fill="#fff"/><circle cx="3105.45" cy="54.55" r="0.56" fill="#fff"/><circle cx="3106.88" cy="55.98" r="0.55" fill="#fff"/><circle cx="3105.45" cy="57.40" r="0.58" fill="#fff"/><circle cx="3106.88" cy="58.83" r="0.57" fill="#fff"/><circle cx="3105.45" cy="60.25" r="0.60" fill="#fff"/><circle cx="3105.45" cy="83.05" r="0.60" fill="#fff"/><circle cx="3106.88" cy="84.47" r="0.57" fill="#fff"/><circle cx="3105.45" cy="85.90" r="0.58" fill="#fff"/><circle cx="3106.88" cy="87.33" r="0.56" fill="#fff"/><circle cx="3105.45" cy="88.75" r="0.56" fill="#fff"/><circle cx="3108.30" cy="85.90" r="0.55" fill="#fff"/><circle cx="3437.9" cy="72.9" r="19.9" fill="#5f3dff"/><path d="M3430 72.9 H3445.8 M3437.9 65 V80.8" stroke="#fff" stroke-width="4.2" stroke-linecap="round"/><g transform="translate(3408,146)" fill="none" stroke="#5f3dff" stroke-width="3.3" stroke-linecap="round"><path d="M29.7 20.6 V11.9 A17.9 17.9 0 1 1 16.6 17.5"/><path d="M20.6 20.6 L31.9 27.9 A3 3 0 1 1 28 31.9 Z" fill="#5f3dff" stroke-width="1" stroke-linejoin="round"/></g><g transform="translate(3408,250)" fill="none" stroke="#5f3dff" stroke-width="3.7" stroke-linecap="round" stroke-linejoin="round"><path d="M14 14.9 H46 V42.5 a4.6 4.6 0 0 1 -4.6 4.6 H18.6 a4.6 4.6 0 0 1 -4.6 -4.6 Z"/><path d="M22 10.9 V19.2 M29.9 10.9 V19.2 M37.9 10.9 V19.2 M26 26.9 H38 M21.8 35 H38"/></g><g transform="translate(3408,354)" fill="none" stroke="#5f3dff" stroke-width="3.3" stroke-linecap="round" stroke-linejoin="round"><path d="M17.6 37.2 C13.3 34.5 10.9 30.6 10.9 26.3 C10.9 18.8 17.5 14.3 25.5 14.3 C33.5 14.3 40.1 18.8 40.1 26.3 C40.1 33.8 33.5 38.3 25.5 38.3 C24 38.3 22.6 38.2 21.3 37.9 L14.8 42.3 Z" /><path d="M44.9 21.3 C48.4 24.1 49.9 27.8 49.9 31.3 C49.9 35.5 47.6 38.7 43.5 41 L45.9 46 L38.8 42.2 C36.6 42.2 34.3 42 32.4 41.7"/></g><g transform="translate(3408,458)" fill="none" stroke="#5f3dff" stroke-width="3.6" stroke-linecap="round" stroke-linejoin="round"><circle cx="29.9" cy="15" r="4.1"/><path d="M29.9 19.2 V46.5 M25.6 25.1 H34.3 M20 33.2 H16.2 A13.8 13.8 0 0 0 43.7 33.2 H40"/></g><path transform="translate(2520,1540)" d="M10.1 25.3 H15.5 L21.6 13.2 L29.3 37.3 L35.4 25.3 H40.8" fill="none" stroke="#111" stroke-width="2.8" stroke-linecap="round" stroke-linejoin="round"/><path transform="translate(3268,1540)" d="M10.1 25.3 H15.5 L21.6 13.2 L29.3 37.3 L35.4 25.3 H40.8" fill="none" stroke="#111" stroke-width="2.8" stroke-linecap="round" stroke-linejoin="round"/></svg>
</body></html>
